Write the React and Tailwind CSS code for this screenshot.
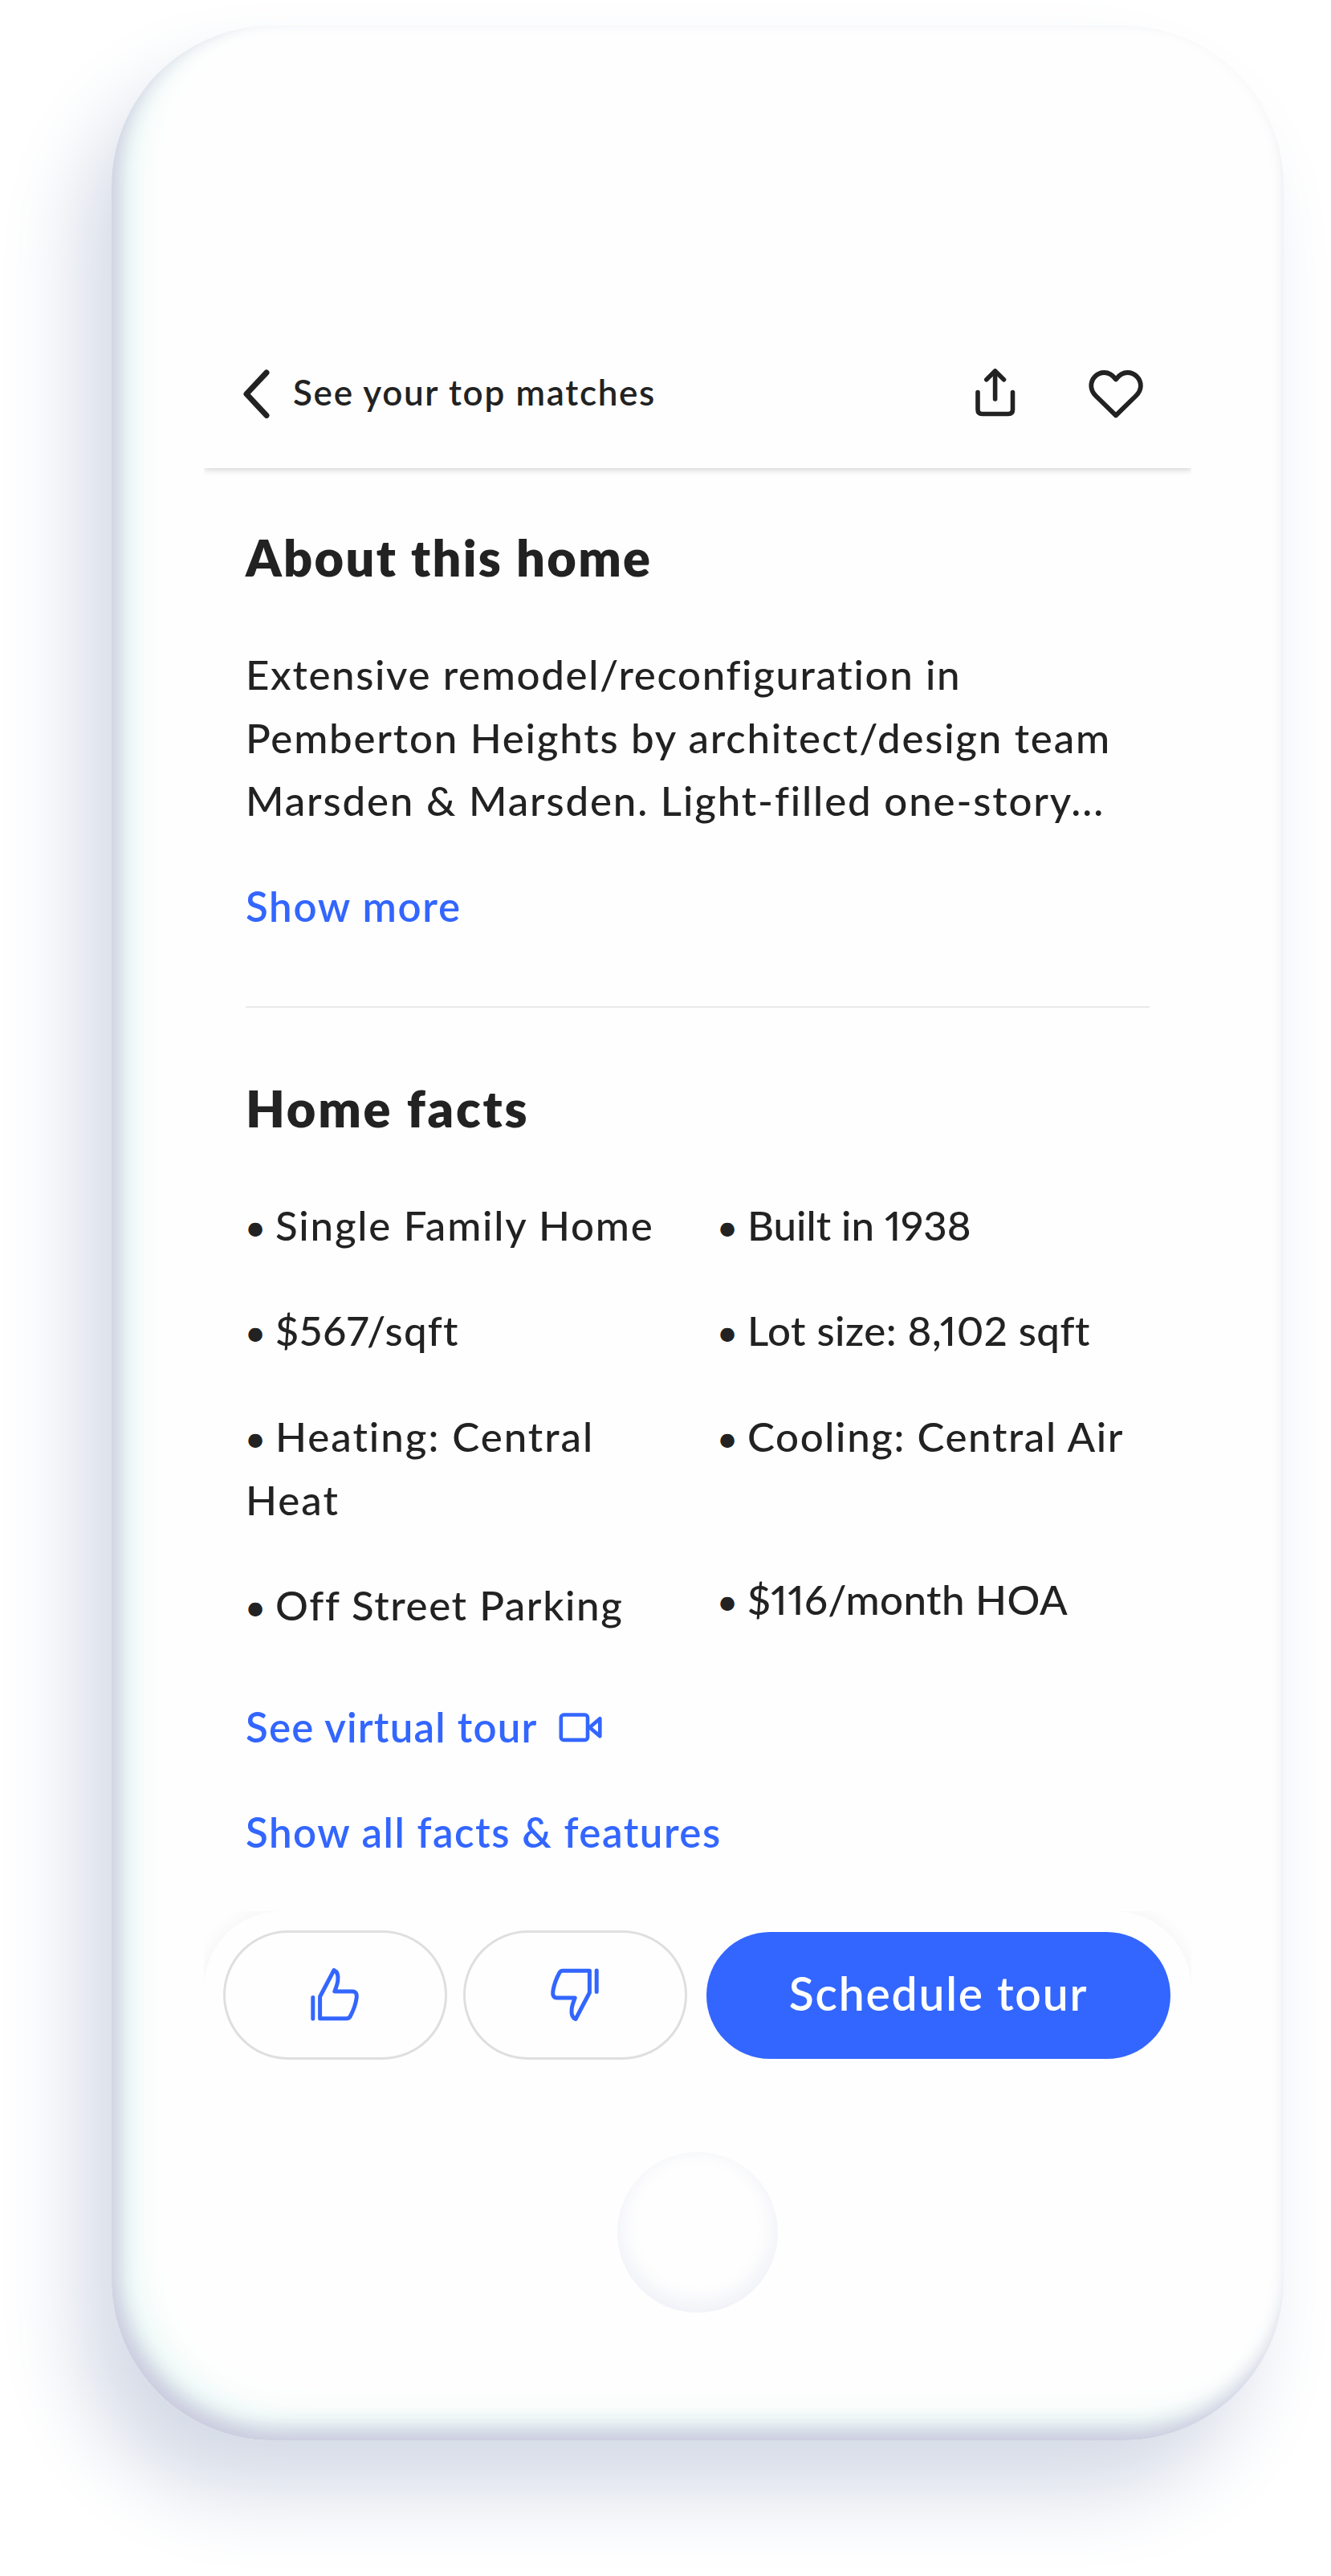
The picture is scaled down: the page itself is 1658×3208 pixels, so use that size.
import React from "react";

function ChevronIcon() {
  return (
    <svg viewBox="303 460 33 61" className="h-[61px] w-[33px] shrink-0" fill="none" stroke="currentColor" strokeWidth="7" strokeLinecap="round" strokeLinejoin="round">
      <path d="M332 464 L307 490.7 L332 517.4" />
    </svg>
  );
}

function ShareIcon() {
  return (
    <svg viewBox="1215 457 50 61" className="mb-[5px] h-[61px] w-[50px]" fill="none" stroke="currentColor" strokeWidth="5.6" strokeLinecap="round" strokeLinejoin="round">
      <path d="M1218 487.5 V509 Q1218 514.5 1223.5 514.5 H1256 Q1261.500 514.5 1261.500 509 V487.5" />
      <path d="M1239.600 461.5 V496" />
      <path d="M1228.800 471.7 L1239.600 461 L1250.500 471.7" />
    </svg>
  );
}

function HeartIcon() {
  return (
    <svg viewBox="1356 459 68 63" className="h-[63px] w-[68px]" fill="none" stroke="currentColor" strokeWidth="5.8" strokeLinejoin="round">
      <path d="M1390 472.500 C1386 467 1381 464 1375.500 464 C1366.500 464 1359.300 471.5 1359.300 480.500 C1359.300 486 1361.500 489.500 1365 493 L1390 517.300 L1415 493 C1418.500 489.500 1420.900 486 1420.900 480.500 C1420.900 471.5 1413.500 464 1404.500 464 C1399 464 1394 467 1390 472.500 Z" />
    </svg>
  );
}

function VideoIcon() {
  return (
    <svg viewBox="696 2133 55 38" className="h-[38px] w-[55px]" fill="none" stroke="currentColor" strokeWidth="4.600" strokeLinejoin="round">
      <rect x="698.800" y="2136.500" width="33.200" height="31.400" rx="3.500" />
      <path d="M734.500 2152.300 L747.300 2141.300 V2163.300 Z" />
    </svg>
  );
}

function ThumbIcon({ down }) {
  return (
    <svg viewBox="382 2446 70 76" className={down ? "mr-[2px] h-[76px] w-[70px] rotate-180" : "mr-[2px] h-[76px] w-[70px]"} fill="none" stroke="currentColor" strokeWidth="5" strokeLinecap="round" strokeLinejoin="round">
      <path d="M389.800 2487.500 V2514" />
      <path d="M398.600 2513.800 V2486.500 L416 2453.500 C420.500 2455.500 421.500 2461 420.800 2466.500 C420.200 2471.500 418.500 2475.500 416.800 2480 H439 C443.500 2480 444.800 2483.500 444.200 2488 C443 2496.500 440 2504 436.300 2511 Q434.800 2513.800 432 2513.800 Z" />
    </svg>
  );
}

function Fact({ children, more, className }) {
  return (
    <li className={className}>
      <div className="flex">
        <span className="-mb-[3px] -ml-[1px] w-[38px] pt-[3px] text-[45px] tracking-normal">•</span>
        <span>{children}</span>
      </div>
      {more && <div>{more}</div>}
    </li>
  );
}

export default function App() {
  return (
    <div className="h-[3208px] w-[1658px] overflow-hidden bg-white pl-[139px] pt-[32px] font-['Lato',sans-serif] text-[#222222]">
      <div className="flex h-[3007px] w-[1460px] flex-col items-center rounded-[200px] bg-[#fefefe] shadow-[inset_9px_-14px_24px_#cacade,inset_30px_-30px_40px_#eaf9f6,-40px_66px_100px_#d5dbe7]">
        <div className="mt-[366px] w-[1230px]">
          <div className="overflow-hidden pb-[12px]">
            <header className="flex h-[185px] items-center bg-[#fefefe] pl-[49px] pr-[60px] shadow-[0_2px_8px_rgba(0,0,0,0.18)]">
              <ChevronIcon />
              <span className="ml-[29px] pb-[6px] text-[44px] font-semibold tracking-[1.68px]">See your top matches</span>
              <div className="ml-auto flex items-center gap-[91px]">
                <ShareIcon />
                <HeartIcon />
              </div>
            </header>
          </div>

          <main className="px-[52px]">
            <section className="border-b-2 border-[#e9e9e9] pb-[85px] pt-[59px]">
              <h1 className="text-[63px] font-extrabold leading-[80px] tracking-[2.3px]">About this home</h1>
              <p className="mt-[67px] whitespace-nowrap text-[51px] font-medium leading-[78.5px]">
                <span className="block tracking-[1.65px]">Extensive remodel/reconfiguration in</span>
                <span className="block tracking-[1.79px]">Pemberton Heights by architect/design team</span>
                <span className="block tracking-[1.86px]">Marsden &amp; Marsden. Light-filled one-story...</span>
              </p>
              <a className="mt-[52px] block text-[51px] font-semibold leading-[79px] tracking-[1.7px] text-[#3366ff]">Show more</a>
            </section>

            <section className="pt-[85px]">
              <h2 className="text-[63px] font-extrabold leading-[80px] tracking-[2.8px]">Home facts</h2>
              <div className="mt-[66px] flex text-[51px] font-medium proportional-nums leading-[79px]">
                <ul className="flex w-[588px] flex-col gap-[52.5px]">
                  <Fact className="tracking-[1.8px]">Single Family Home</Fact>
                  <Fact className="tracking-[1.25px]">$567/sqft</Fact>
                  <Fact className="tracking-[2px]" more="Heat">Heating: Central</Fact>
                  <Fact className="tracking-[1.6px]">Off Street Parking</Fact>
                </ul>
                <ul className="flex flex-col gap-[52.5px] whitespace-nowrap">
                  <Fact className="tracking-[0px]">Built in 1938</Fact>
                  <Fact className="tracking-[0.5px]">Lot size: 8,102 sqft</Fact>
                  <Fact className="h-[151px] tracking-[1.6px]">Cooling: Central Air</Fact>
                  <Fact className="tracking-[0.4px]">$116/month HOA</Fact>
                </ul>
              </div>
              <div className="mt-[74px] flex flex-col gap-[52.5px] text-[51px] font-semibold leading-[78.5px] text-[#3366ff]">
                <a className="flex items-center gap-[26px] tracking-[1.2px]">
                  See virtual tour
                  <VideoIcon />
                </a>
                <a className="tracking-[1.5px]">Show all facts &amp; features</a>
              </div>
            </section>
          </main>

          <div className="mt-[58px] overflow-hidden">
            <div className="flex h-[185px] items-start rounded-t-[96px] bg-[#fefefe] pl-[24px] pt-[24px] shadow-[0_0_24px_rgba(0,0,0,0.05)]">
              <button className="flex h-[161px] w-[279px] items-center justify-center rounded-full border-[3px] border-[#dfdfdf] text-[#3366ff]">
                <ThumbIcon />
              </button>
              <button className="ml-[20px] flex h-[161px] w-[279px] items-center justify-center rounded-full border-[3px] border-[#dfdfdf] text-[#3366ff]">
                <ThumbIcon down />
              </button>
              <button className="ml-[24px] mt-[2px] h-[158px] w-[578px] rounded-full bg-[#3366ff] pb-[4px] text-[57px] font-semibold tracking-[1.8px] text-white">Schedule tour</button>
            </div>
          </div>
        </div>
        <div className="mt-[115px] size-[200px] rounded-full shadow-[inset_0_-8px_30px_#eceef6]" />
      </div>
    </div>
  );
}
